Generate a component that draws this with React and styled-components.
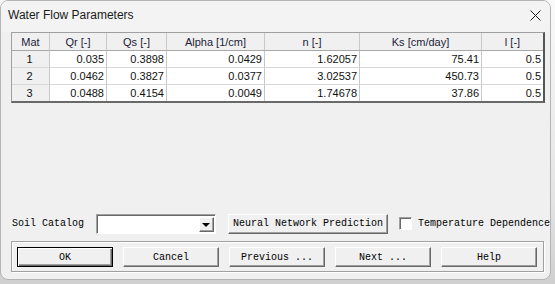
import React from "react";
import styled, { createGlobalStyle } from "styled-components";

const GlobalStyle = createGlobalStyle`
  html, body {
    margin: 0;
    padding: 0;
  }
  body {
    width: 555px;
    height: 284px;
    overflow: hidden;
    background: linear-gradient(180deg, #fafafa 0%, #e4e4e4 70%, #cfcfcf 100%);
  }
`;

const Window = styled.div`
  box-sizing: border-box;
  width: 551px;
  height: 280px;
  display: flex;
  flex-direction: column;
  background: #f0f0f0;
  border: 1px solid #b4b4b4;
  border-radius: 8px;
  overflow: hidden;
`;

const TitleBar = styled.div`
  height: 31px;
  flex-shrink: 0;
  display: flex;
  align-items: center;
  justify-content: space-between;
  padding: 0 8px 3px 7px;
  box-sizing: border-box;
  background: #f3f3f3;
`;

const Title = styled.span`
  font-family: "Segoe UI", "Liberation Sans", Arial, sans-serif;
  font-size: 12px;
  color: #1a1a1a;
`;

const CloseIcon = styled.svg`
  width: 11px;
  height: 11px;
  margin-right: 1px;
`;

const Body = styled.div`
  flex: 1;
  display: flex;
  flex-direction: column;
  padding: 0 7px 7px 10px;
`;

const Grid = styled.table`
  width: 534px;
  table-layout: fixed;
  border-collapse: separate;
  border-spacing: 0;
  border-style: solid;
  border-width: 1px 2px 2px 1px;
  border-color: #a0a0a0 #555 #696969 #a0a0a0;
  background: #fff;
  font-family: "Liberation Sans", Tahoma, Arial, sans-serif;
  font-size: 11px;
  color: #111;
`;

const HeadCell = styled.th`
  height: 17px;
  padding: 0;
  font-weight: normal;
  text-align: center;
  background: #f0f0f0;
  color: #1c1c3a;
  border-right: 1px solid #c8c8c8;
  border-bottom: 1px solid #a8a8a8;
  &:last-child {
    border-right: none;
  }
`;

const Cell = styled.td`
  height: 16px;
  padding: 0 2px 0 0;
  text-align: ${(p) => (p.$key ? "center" : "right")};
  background: ${(p) => (p.$key ? "#f0f0f0" : "#fff")};
  border-right: 1px solid #c8c8c8;
  border-bottom: 1px solid #d8d8d8;
  white-space: nowrap;
  overflow: hidden;
  &:last-child {
    border-right: none;
  }
  tr:last-child > & {
    border-bottom: none;
  }
`;

const Spacer = styled.div`
  flex: 1;
`;

const Row = styled.div`
  display: flex;
  align-items: center;
  height: 21px;
  padding-left: 1px;
  margin-bottom: 7px;
  white-space: nowrap;
  font-family: "Liberation Mono", "Courier New", monospace;
  font-size: 10px;
  color: #000;
`;

const Label = styled.span`
  width: 84px;
  flex-shrink: 0;
`;

const Combo = styled.div`
  box-sizing: border-box;
  width: 120px;
  height: 20px;
  flex-shrink: 0;
  display: flex;
  justify-content: flex-end;
  background: #fff;
  border: 1px solid;
  border-color: #a0a0a0 #fff #fff #a0a0a0;
  box-shadow: inset 1px 1px 0 #696969;
  padding: 2px 1px 1px 2px;
  margin-right: 12px;
`;

const ComboArrow = styled.div`
  box-sizing: border-box;
  width: 15px;
  height: 100%;
  display: flex;
  align-items: center;
  justify-content: center;
  background: #f0f0f0;
  border: 1px solid;
  border-color: #fff #696969 #696969 #fff;
  box-shadow: inset -1px -1px 0 #a0a0a0;
  &::after {
    content: "";
    border-left: 4px solid transparent;
    border-right: 4px solid transparent;
    border-top: 4px solid #000;
    margin: 1px 1px 0 0;
  }
`;

const Button = styled.button`
  box-sizing: border-box;
  width: ${(p) => p.$w || 96}px;
  height: 20px;
  padding: 0;
  flex-shrink: 0;
  background: #f0f0f0;
  font-family: "Liberation Mono", "Courier New", monospace;
  font-size: 10px;
  color: #000;
  white-space: nowrap;
  border: 1px solid;
  border-color: ${(p) => (p.$default ? "#000" : "#fff #696969 #696969 #fff")};
  box-shadow: ${(p) =>
    p.$default
      ? "inset 1px 1px 0 #fff, inset -1px -1px 0 #696969, inset -2px -2px 0 #a0a0a0"
      : "inset -1px -1px 0 #a0a0a0"};
`;

const Check = styled.span`
  box-sizing: border-box;
  width: 13px;
  height: 13px;
  flex-shrink: 0;
  margin: 0 6px 0 11px;
  background: #fff;
  border: 1px solid;
  border-color: #a0a0a0 #fff #fff #a0a0a0;
  box-shadow: inset 1px 1px 0 #696969;
`;

const CheckLabel = styled.span`
  flex-shrink: 0;
`;

const Group = styled.div`
  box-sizing: border-box;
  width: 533px;
  display: flex;
  gap: 10px;
  padding: 5px 5px 4px 5px;
  border: 1px solid #a0a0a0;
  box-shadow: inset 1px 1px 0 #fff, 1px 1px 0 #fff;
`;

const columns = [
  ["Mat", 38],
  ["Qr [-]", 57],
  ["Qs [-]", 60],
  ["Alpha [1/cm]", 98],
  ["n [-]", 95],
  ["Ks [cm/day]", 122],
  ["l [-]", 61],
];

const rows = [
  ["1", "0.035", "0.3898", "0.0429", "1.62057", "75.41", "0.5"],
  ["2", "0.0462", "0.3827", "0.0377", "3.02537", "450.73", "0.5"],
  ["3", "0.0488", "0.4154", "0.0049", "1.74678", "37.86", "0.5"],
];

export default function App() {
  return (
    <>
      <GlobalStyle />
      <Window>
        <TitleBar>
          <Title>Water Flow Parameters</Title>
          <CloseIcon viewBox="0 0 11 11">
            <path d="M0.5 0.5 L10.5 10.5 M10.5 0.5 L0.5 10.5" stroke="#1a1a1a" strokeWidth="1" fill="none" />
          </CloseIcon>
        </TitleBar>
        <Body>
          <Grid>
            <colgroup>
              {columns.map(([name, w]) => (
                <col key={name} style={{ width: w }} />
              ))}
            </colgroup>
            <thead>
              <tr>
                {columns.map(([name]) => (
                  <HeadCell key={name}>{name}</HeadCell>
                ))}
              </tr>
            </thead>
            <tbody>
              {rows.map((r) => (
                <tr key={r[0]}>
                  {r.map((v, i) => (
                    <Cell key={i} $key={i === 0}>
                      {v}
                    </Cell>
                  ))}
                </tr>
              ))}
            </tbody>
          </Grid>
          <Spacer />
          <Row>
            <Label>Soil Catalog</Label>
            <Combo>
              <ComboArrow />
            </Combo>
            <Button $w={160}>Neural Network Prediction</Button>
            <Check />
            <CheckLabel>Temperature Dependence</CheckLabel>
          </Row>
          <Group>
            <Button $default>OK</Button>
            <Button>Cancel</Button>
            <Button>Previous ...</Button>
            <Button>Next ...</Button>
            <Button>Help</Button>
          </Group>
        </Body>
      </Window>
    </>
  );
}
